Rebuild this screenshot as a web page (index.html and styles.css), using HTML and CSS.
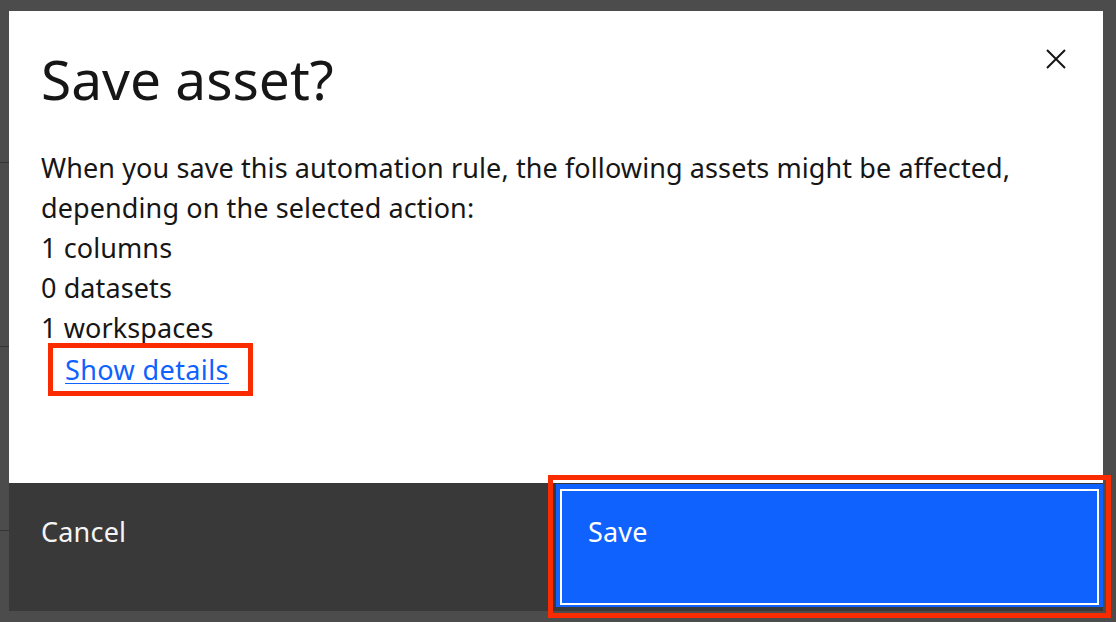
FILE: index.html
```html
<!DOCTYPE html>
<html lang="en">
<head>
<meta charset="utf-8">
<title>Save asset?</title>
<link rel="stylesheet" href="styles.css">
</head>
<body>
<div class="page">
  <div class="edge-top"></div>
  <div class="middle">
    <div class="left-strip">
      <div class="strip-row r1"></div>
      <div class="strip-row"></div>
      <div class="strip-row"></div>
      <div class="strip-row last"></div>
    </div>
    <div class="modal" role="dialog" aria-labelledby="modal-title">
      <div class="modal-main">
        <div class="modal-header">
          <h2 class="modal-title" id="modal-title">Save asset?</h2>
          <button class="close-btn" aria-label="Close">
            <svg width="20" height="20" viewBox="0 0 20 20" aria-hidden="true">
              <path d="M1 1 L19 19 M19 1 L1 19" stroke="#161616" stroke-width="2" fill="none"/>
            </svg>
          </button>
        </div>
        <div class="modal-content">
          <p class="line">When you save this automation rule, the following assets might be affected,</p>
          <p class="line">depending on the selected action:</p>
          <p class="line">1 columns</p>
          <p class="line">0 datasets</p>
          <p class="line">1 workspaces</p>
          <div class="link-row">
            <span class="mark mark-link"><a class="details-link" href="#">Show details</a></span>
          </div>
        </div>
      </div>
      <div class="modal-footer">
        <button class="btn btn-secondary">Cancel</button>
        <div class="mark mark-save">
          <button class="btn btn-primary"><span class="btn-focus">Save</span></button>
        </div>
      </div>
    </div>
  </div>
</div>
</body>
</html>
```

FILE: styles.css
```css
html, body {
  margin: 0;
  padding: 0;
}
body {
  background: #4c4c4c;
  font-family: "Noto Sans", "Open Sans", sans-serif;
  color: #161616;
  overflow: hidden;
}
.page {
  width: 1116px;
  height: 622px;
  display: flex;
  flex-direction: column;
  overflow: hidden;
}
.edge-top {
  height: 11px;
  flex: none;
}
.middle {
  display: flex;
  flex: none;
  height: 600px;
}
.left-strip {
  width: 9px;
  flex: none;
  display: flex;
  flex-direction: column;
  overflow: hidden;
}
.strip-row {
  height: 183px;
  border-bottom: 1px solid #363636;
  flex: none;
}
.strip-row.r1 {
  height: 151px;
}
.strip-row.last {
  flex: 1;
  height: auto;
  border-bottom: 0;
}
.modal {
  width: 1094px;
  height: 600px;
  flex: none;
  background: #ffffff;
  display: flex;
  flex-direction: column;
}
.modal-main {
  flex: 1;
  padding: 0 32px;
}
.modal-header {
  display: flex;
  justify-content: space-between;
  align-items: flex-start;
}
.modal-title {
  margin: 0;
  padding-top: 28px;
  font-size: 55px;
  font-weight: 400;
  line-height: 80px;
  color: #161616;
}
.close-btn {
  margin: 38px 5px 0 0;
  width: 20px;
  height: 20px;
  padding: 0;
  border: 0;
  background: none;
  display: flex;
}
.modal-content {
  padding-top: 29px;
}
.line {
  margin: 0;
  font-size: 27px;
  letter-spacing: 0.1px;
  line-height: 40px;
  color: #161616;
}
.link-row {
  margin-top: -5px;
  margin-left: 7px;
  display: flex;
}
.mark {
  border: 5px solid #fb2b00;
}
.mark-link {
  display: inline-block;
  height: 43px;
  padding: 0 19px 0 12px;
  line-height: 43px;
}
.details-link {
  font-size: 27px;
  letter-spacing: 0.4px;
  color: #0f62fe;
  text-decoration: underline;
  text-underline-offset: 3px;
  text-decoration-thickness: 1px;
}
.modal-footer {
  height: 128px;
  flex: none;
  display: flex;
  background: #393939;
}
.btn {
  font-family: inherit;
  font-size: 27px;
  letter-spacing: 0.2px;
  border: 0;
  margin: 0;
  text-align: left;
  cursor: pointer;
}
.btn-secondary {
  width: 547px;
  flex: none;
  background: #393939;
  color: #f4f4f4;
  padding: 0 0 32px 32px;
}
.mark-save {
  margin: -8px -8px -7px -8px;
  padding: 4px 3px 6px 3px;
  flex: 1;
  display: flex;
}
.btn-primary {
  flex: 1;
  background: #0f62fe;
  color: #ffffff;
  padding: 5px 4px 2px 4px;
  display: flex;
}
.btn-focus {
  flex: 1;
  border: 2px solid #ffffff;
  padding: 0 0 32px 26px;
  display: flex;
  align-items: center;
}
```
